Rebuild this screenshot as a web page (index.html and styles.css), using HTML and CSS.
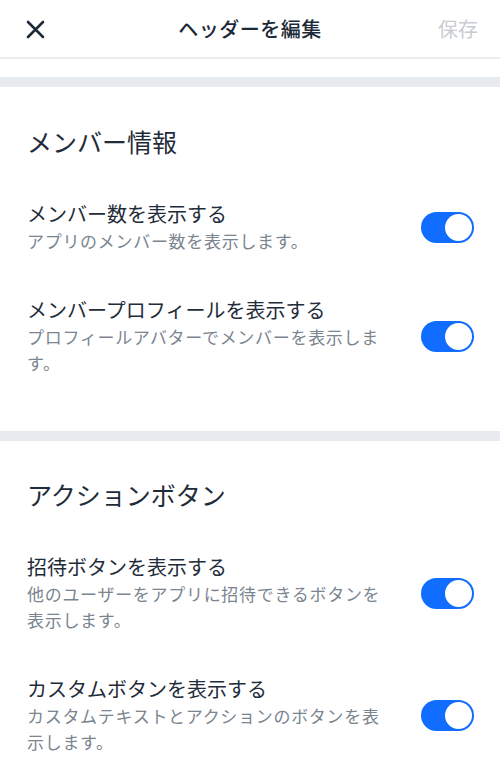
FILE: index.html
```html
<!DOCTYPE html>
<html lang="ja">
  <head>
    <meta charset="UTF-8" />
    <meta name="viewport" content="width=device-width, initial-scale=1.0" />
    <title>ヘッダーを編集</title>
    <link rel="stylesheet" href="styles.css">
  </head>
  <body>
    <!-- Top bar -->
    <header class="topbar">
      <button class="close-btn" aria-label="閉じる">
        <svg width="19" height="19" viewBox="0 0 19 19">
          <path d="M2 2 L17 17 M17 2 L2 17" stroke="#1c2a38" stroke-width="2.6" stroke-linecap="round" fill="none" />
        </svg>
      </button>
      <h1 class="topbar-title">ヘッダーを編集</h1>
      <span class="save-btn">保存</span>
    </header>

    <div class="spacer"></div>

    <section class="section">
      <h2 class="section-title">メンバー情報</h2>

      <div class="row">
        <div class="row-text">
          <div class="row-title">メンバー数を表示する</div>
          <div class="row-desc">アプリのメンバー数を表示します。</div>
        </div>
        <div class="toggle on"><span class="knob"></span></div>
      </div>

      <div class="row">
        <div class="row-text">
          <div class="row-title">メンバープロフィールを表示する</div>
          <div class="row-desc">プロフィールアバターでメンバーを表示します。</div>
        </div>
        <div class="toggle on"><span class="knob"></span></div>
      </div>
    </section>

    <section class="section">
      <h2 class="section-title">アクションボタン</h2>

      <div class="row">
        <div class="row-text">
          <div class="row-title">招待ボタンを表示する</div>
          <div class="row-desc">他のユーザーをアプリに招待できるボタンを表示します。</div>
        </div>
        <div class="toggle on"><span class="knob"></span></div>
      </div>

      <div class="row">
        <div class="row-text">
          <div class="row-title">カスタムボタンを表示する</div>
          <div class="row-desc">カスタムテキストとアクションのボタンを表示します。</div>
        </div>
        <div class="toggle on"><span class="knob"></span></div>
      </div>
    </section>
  </body>
</html>
```

FILE: styles.css
```css
body {
  margin: 0;
  font-family: "Noto Sans CJK JP", "Noto Sans", sans-serif;
  background-color: white;
  color: #1f2c3a;
  overflow: hidden;
}

.topbar {
  height: 57px;
  display: flex;
  align-items: center;
  justify-content: space-between;
  padding: 0 22px 0 26px;
  border-bottom: 2px solid #ececee;
  position: relative;
}

.close-btn {
  background: none;
  border: none;
  padding: 0;
  width: 19px;
  height: 19px;
  margin-top: 2px;
  cursor: pointer;
}

.close-btn svg {
  display: block;
}

.topbar-title {
  position: absolute;
  left: 0;
  right: 0;
  text-align: center;
  margin: 0;
  font-size: 20px;
  font-weight: 500;
  line-height: 28px;
  letter-spacing: 0.5px;
  color: #1c2a38;
  pointer-events: none;
}

.save-btn {
  font-size: 20px;
  color: #c9ccd1;
  line-height: 28px;
}

.spacer {
  height: 18px;
}

/* Each section starts with a grey band */
.section {
  border-top: 10px solid #e7eaee;
  padding: 37px 26px 55px 27px;
}

.section + .section {
  padding-top: 36px;
}

.section-title {
  margin: 0 0 42px;
  font-size: 25px;
  font-weight: normal;
  line-height: 34px;
  color: #1f2c3a;
}

.row {
  display: flex;
  align-items: center;
  justify-content: space-between;
}

.row + .row {
  margin-top: 42px;
}

.row-text {
  width: 362px;
}

.row-title {
  font-size: 20px;
  line-height: 28px;
  color: #1f2c3a;
}

.row-desc {
  font-size: 17px;
  line-height: 26px;
  letter-spacing: 0.7px;
  color: #7b8590;
}

.toggle {
  width: 53px;
  height: 31px;
  border-radius: 16px;
  background-color: #c9ccd1;
  position: relative;
  flex-shrink: 0;
}

.toggle.on {
  background-color: #116dff;
}

.knob {
  position: absolute;
  top: 2px;
  left: 2px;
  width: 27px;
  height: 27px;
  border-radius: 50%;
  background-color: white;
}

.toggle.on .knob {
  left: 24px;
}
```
